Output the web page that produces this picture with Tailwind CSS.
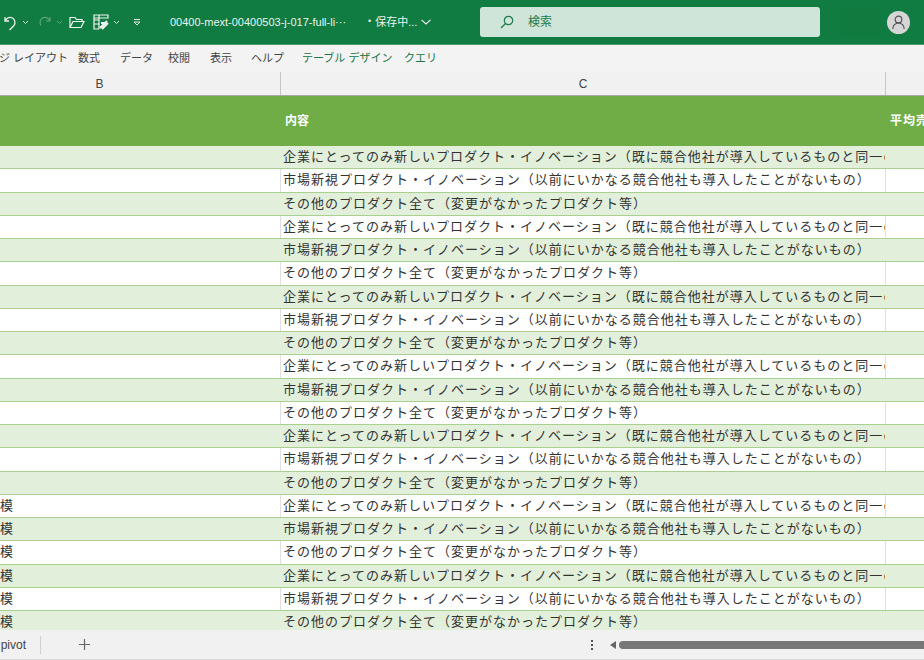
<!DOCTYPE html>
<html lang="ja">
<head>
<meta charset="utf-8">
<script src="https://cdn.jsdelivr.net/npm/@tailwindcss/browser@4"></script>
</head>
<body class="w-[924px] h-[660px] overflow-hidden bg-white font-['Liberation_Sans','Noto_Sans_CJK_JP',sans-serif]">
<div class="flex flex-col w-[924px] h-[660px] overflow-hidden">
  <!-- title bar -->
  <div class="h-[45px] shrink-0 bg-[#107c41] border-b border-[#4f9b70] flex items-center text-white">
    <div class="w-[170px] shrink-0 flex items-center">
      <svg class="ml-[2px]" width="16" height="17" viewBox="0 0 16 17" fill="none" stroke="#e8f2ec" stroke-width="1.3"><path d="M3 3v4h4M3.3 6.5C5 3.5 8 2.5 10.5 4s3.2 5 1.5 7.5L7.5 16"/></svg>
      <svg class="ml-[4px]" width="7" height="5" viewBox="0 0 7 5" fill="none" stroke="#d5e6dc"><path d="M1 1l2.5 2.5L6 1"/></svg>
      <svg class="ml-[8px]" width="16" height="17" viewBox="0 0 16 17" fill="none" stroke="#5fa37e" stroke-width="1.2"><path d="M13 3v4H9M12.7 6.5C11 3.5 8 2.5 5.5 4S2.3 9 4 11.500"/></svg>
      <svg class="ml-[3px]" width="7" height="5" viewBox="0 0 7 5" fill="none" stroke="#5fa37e"><path d="M1 1l2.500 2.500L6 1"/></svg>
      <svg class="ml-[6px]" width="16" height="13" viewBox="0 0 16 13" fill="none" stroke="#eef5f1" stroke-width="1.200"><path d="M1 11.500V1.500h5l1.500 2H13v2M1 11.500h11l3-6H4l-3 6z"/></svg>
      <svg class="ml-[8px]" width="16" height="16" viewBox="0 0 16 16" fill="none" stroke="#eef5f1" stroke-width="1.200"><path d="M1 1h14v3H1zM1 1v14h5M1 6h5M1 10h5M6 1v14"/><path d="M7 14l7-7M9 15l6-6M8 9h5" stroke-width="2"/></svg>
      <svg class="ml-[4px]" width="7" height="5" viewBox="0 0 7 5" fill="none" stroke="#d5e6dc"><path d="M1 1l2.500 2.500L6 1"/></svg>
      <svg class="ml-[13px]" width="8" height="7" viewBox="0 0 8 7" fill="none" stroke="#e0eee6"><path d="M1 .5h6M1 3l3 3 3-3z"/></svg>
    </div>
    <div class="text-[11px] text-[#eaf3ee] whitespace-nowrap w-[198px] shrink-0">00400-mext-00400503-j-017-full-li···</div>
    <div class="text-[11px] text-[#eaf3ee] whitespace-nowrap flex items-center w-[112px] shrink-0 gap-[4px]"><span class="text-[9px]">•</span><span>保存中...</span>
      <svg width="10" height="6" viewBox="0 0 10 6" fill="none" stroke="#eef5f1" stroke-width="1.100"><path d="M.5 .8L5 5 9.500 .8"/></svg>
    </div>
    <div class="w-[340px] h-[30px] shrink-0 bg-[#cfe5d9] rounded-[3px] flex items-center pl-[20px] gap-[14px] text-[12px] text-[#1d7a4b]">
      <svg width="14" height="14" viewBox="0 0 14 14" fill="none" stroke="#1d7a4b" stroke-width="1.200"><circle cx="8.500" cy="5.500" r="4.200"/><path d="M5.500 8.500L1 13"/></svg>
      <span>検索</span>
    </div>
    <div class="w-[41px] h-[27px] ml-[20px] shrink-0 bg-[#117a3e]"></div>
    <div class="w-[23px] h-[23px] ml-[6px] shrink-0 rounded-full bg-[#d6d6d6] flex items-center justify-center">
      <svg width="15" height="15" viewBox="0 0 15 15" fill="none" stroke="#555" stroke-width="1.200"><circle cx="7.500" cy="4.500" r="3.300"/><path d="M1.800 14c0-3.500 2.500-6 5.700-6s5.700 2.500 5.700 6"/></svg>
    </div>
  </div>
  <!-- ribbon tabs -->
  <div class="h-[27px] shrink-0 bg-[#f3f3f3] flex items-center text-[11px] text-[#444] whitespace-nowrap overflow-hidden">
    <span class="w-[79px] shrink-0 -ml-[1px]">ジ レイアウト</span>
    <span class="w-[42px] shrink-0">数式</span>
    <span class="w-[48px] shrink-0">データ</span>
    <span class="w-[42px] shrink-0">校閲</span>
    <span class="w-[41px] shrink-0">表示</span>
    <span class="w-[51px] shrink-0">ヘルプ</span>
    <span class="w-[102px] shrink-0 text-[#217346]">テーブル デザイン</span>
    <span class="shrink-0 text-[#217346]">クエリ</span>
  </div>
  <!-- column headers -->
  <div class="h-[24px] shrink-0 bg-[#f1f1f1] flex items-center text-[12px] text-[#444] border-b border-[#a8a8a8]">
    <div class="w-[281px] h-full shrink-0 border-r border-[#c6c6c6] flex items-center justify-center pl-[-1px] pr-[81px] pl-[0px]">B</div>
    <div class="w-[605px] h-full shrink-0 border-r border-[#c6c6c6] flex items-center justify-center">C</div>
  </div>
  <!-- table header -->
  <div class="h-[50px] shrink-0 bg-[#70ad47] flex items-center text-[12px] font-bold text-white whitespace-nowrap">
    <div class="w-[285px] shrink-0"></div>
    <div class="w-[605px] shrink-0">内容</div>
    <div class="shrink-0 tracking-[1px]">平均売</div>
  </div>
  <!-- rows -->
  <div class="flex-1 min-h-0 overflow-hidden text-[13px] tracking-[1px] text-[#333] whitespace-nowrap" id="rows">
    <div class="h-[23.25px] flex bg-[#e2efda] border-b border-[#a9d08e]"><div class="w-[281px] shrink-0"></div><div class="w-[604px] shrink-0 pl-[2px] overflow-hidden leading-[22px]">企業にとってのみ新しいプロダクト・イノベーション（既に競合他社が導入しているものと同一のもの）</div></div>
    <div class="h-[23.25px] flex bg-white border-b border-[#a9d08e]"><div class="w-[281px] shrink-0 border-r border-[#e0e0e0]"></div><div class="w-[605px] shrink-0 pl-[2px] overflow-hidden leading-[22px] border-r border-[#e0e0e0]">市場新視プロダクト・イノベーション（以前にいかなる競合他社も導入したことがないもの）</div></div>
    <div class="h-[23.25px] flex bg-[#e2efda] border-b border-[#a9d08e]"><div class="w-[281px] shrink-0"></div><div class="w-[604px] shrink-0 pl-[2px] overflow-hidden leading-[22px]">その他のプロダクト全て（変更がなかったプロダクト等）</div></div>
    <div class="h-[23.25px] flex bg-white border-b border-[#a9d08e]"><div class="w-[281px] shrink-0 border-r border-[#e0e0e0]"></div><div class="w-[605px] shrink-0 pl-[2px] overflow-hidden leading-[22px] border-r border-[#e0e0e0]">企業にとってのみ新しいプロダクト・イノベーション（既に競合他社が導入しているものと同一のもの）</div></div>
    <div class="h-[23.25px] flex bg-[#e2efda] border-b border-[#a9d08e]"><div class="w-[281px] shrink-0"></div><div class="w-[604px] shrink-0 pl-[2px] overflow-hidden leading-[22px]">市場新視プロダクト・イノベーション（以前にいかなる競合他社も導入したことがないもの）</div></div>
    <div class="h-[23.25px] flex bg-white border-b border-[#a9d08e]"><div class="w-[281px] shrink-0 border-r border-[#e0e0e0]"></div><div class="w-[605px] shrink-0 pl-[2px] overflow-hidden leading-[22px] border-r border-[#e0e0e0]">その他のプロダクト全て（変更がなかったプロダクト等）</div></div>
    <div class="h-[23.25px] flex bg-[#e2efda] border-b border-[#a9d08e]"><div class="w-[281px] shrink-0"></div><div class="w-[604px] shrink-0 pl-[2px] overflow-hidden leading-[22px]">企業にとってのみ新しいプロダクト・イノベーション（既に競合他社が導入しているものと同一のもの）</div></div>
    <div class="h-[23.25px] flex bg-white border-b border-[#a9d08e]"><div class="w-[281px] shrink-0 border-r border-[#e0e0e0]"></div><div class="w-[605px] shrink-0 pl-[2px] overflow-hidden leading-[22px] border-r border-[#e0e0e0]">市場新視プロダクト・イノベーション（以前にいかなる競合他社も導入したことがないもの）</div></div>
    <div class="h-[23.25px] flex bg-[#e2efda] border-b border-[#a9d08e]"><div class="w-[281px] shrink-0"></div><div class="w-[604px] shrink-0 pl-[2px] overflow-hidden leading-[22px]">その他のプロダクト全て（変更がなかったプロダクト等）</div></div>
    <div class="h-[23.25px] flex bg-white border-b border-[#a9d08e]"><div class="w-[281px] shrink-0 border-r border-[#e0e0e0]"></div><div class="w-[605px] shrink-0 pl-[2px] overflow-hidden leading-[22px] border-r border-[#e0e0e0]">企業にとってのみ新しいプロダクト・イノベーション（既に競合他社が導入しているものと同一のもの）</div></div>
    <div class="h-[23.25px] flex bg-[#e2efda] border-b border-[#a9d08e]"><div class="w-[281px] shrink-0"></div><div class="w-[604px] shrink-0 pl-[2px] overflow-hidden leading-[22px]">市場新視プロダクト・イノベーション（以前にいかなる競合他社も導入したことがないもの）</div></div>
    <div class="h-[23.25px] flex bg-white border-b border-[#a9d08e]"><div class="w-[281px] shrink-0 border-r border-[#e0e0e0]"></div><div class="w-[605px] shrink-0 pl-[2px] overflow-hidden leading-[22px] border-r border-[#e0e0e0]">その他のプロダクト全て（変更がなかったプロダクト等）</div></div>
    <div class="h-[23.25px] flex bg-[#e2efda] border-b border-[#a9d08e]"><div class="w-[281px] shrink-0"></div><div class="w-[604px] shrink-0 pl-[2px] overflow-hidden leading-[22px]">企業にとってのみ新しいプロダクト・イノベーション（既に競合他社が導入しているものと同一のもの）</div></div>
    <div class="h-[23.25px] flex bg-white border-b border-[#a9d08e]"><div class="w-[281px] shrink-0 border-r border-[#e0e0e0]"></div><div class="w-[605px] shrink-0 pl-[2px] overflow-hidden leading-[22px] border-r border-[#e0e0e0]">市場新視プロダクト・イノベーション（以前にいかなる競合他社も導入したことがないもの）</div></div>
    <div class="h-[23.25px] flex bg-[#e2efda] border-b border-[#a9d08e]"><div class="w-[281px] shrink-0"></div><div class="w-[604px] shrink-0 pl-[2px] overflow-hidden leading-[22px]">その他のプロダクト全て（変更がなかったプロダクト等）</div></div>
    <div class="h-[23.25px] flex bg-white border-b border-[#a9d08e]"><div class="w-[281px] shrink-0 border-r border-[#e0e0e0] leading-[22px]">模</div><div class="w-[605px] shrink-0 pl-[2px] overflow-hidden leading-[22px] border-r border-[#e0e0e0]">企業にとってのみ新しいプロダクト・イノベーション（既に競合他社が導入しているものと同一のもの）</div></div>
    <div class="h-[23.25px] flex bg-[#e2efda] border-b border-[#a9d08e]"><div class="w-[281px] shrink-0 leading-[22px]">模</div><div class="w-[604px] shrink-0 pl-[2px] overflow-hidden leading-[22px]">市場新視プロダクト・イノベーション（以前にいかなる競合他社も導入したことがないもの）</div></div>
    <div class="h-[23.25px] flex bg-white border-b border-[#a9d08e]"><div class="w-[281px] shrink-0 border-r border-[#e0e0e0] leading-[22px]">模</div><div class="w-[605px] shrink-0 pl-[2px] overflow-hidden leading-[22px] border-r border-[#e0e0e0]">その他のプロダクト全て（変更がなかったプロダクト等）</div></div>
    <div class="h-[23.25px] flex bg-[#e2efda] border-b border-[#a9d08e]"><div class="w-[281px] shrink-0 leading-[22px]">模</div><div class="w-[604px] shrink-0 pl-[2px] overflow-hidden leading-[22px]">企業にとってのみ新しいプロダクト・イノベーション（既に競合他社が導入しているものと同一のもの）</div></div>
    <div class="h-[23.25px] flex bg-white border-b border-[#a9d08e]"><div class="w-[281px] shrink-0 border-r border-[#e0e0e0] leading-[22px]">模</div><div class="w-[605px] shrink-0 pl-[2px] overflow-hidden leading-[22px] border-r border-[#e0e0e0]">市場新視プロダクト・イノベーション（以前にいかなる競合他社も導入したことがないもの）</div></div>
    <div class="h-[23.25px] flex bg-[#e2efda]"><div class="w-[281px] shrink-0 leading-[22px]">模</div><div class="w-[604px] shrink-0 pl-[2px] overflow-hidden leading-[22px]">その他のプロダクト全て（変更がなかったプロダクト等）</div></div>
  </div>
  <!-- sheet tabs -->
  <div class="h-[30px] shrink-0 bg-[#f1f1f1] border-b border-[#d8d8d8] flex items-center text-[12px] text-[#444]">
    <div class="w-[41px] h-[18px] shrink-0 border-r border-[#d0d0d0] overflow-hidden flex items-center justify-end pr-[14px]">pivot</div>
    <svg class="ml-[38px]" width="11" height="11" viewBox="0 0 11 11" fill="none" stroke="#666" stroke-width="1.200"><path d="M5.500 0v11M0 5.500h11"/></svg>
    <div class="ml-[501px] flex flex-col gap-[2px]"><i class="block w-[2px] h-[2px] bg-[#555]"></i><i class="block w-[2px] h-[2px] bg-[#555]"></i><i class="block w-[2px] h-[2px] bg-[#555]"></i></div>
    <svg class="ml-[17px]" width="6" height="8" viewBox="0 0 6 8"><path d="M6 0v8L0 4z" fill="#666"/></svg>
    <div class="ml-[3px] flex-1 h-[8px] rounded-l-full bg-[#777]"></div>
  </div>
</div>
</body>
</html>
